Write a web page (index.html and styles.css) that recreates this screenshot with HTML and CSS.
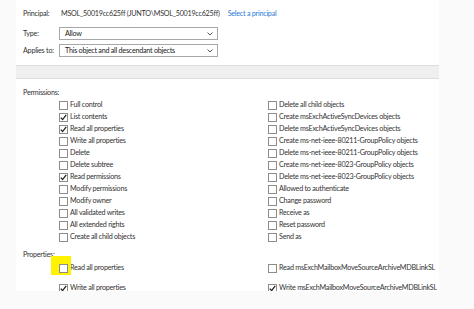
FILE: index.html
```html
<!DOCTYPE html>
<html>
<head>
<meta charset="utf-8">
<link rel="stylesheet" href="styles.css">
</head>
<body>
<div class="panel">
  <div class="principal">
    <span class="lbl">Principal:</span>
    <span class="pval">MSOL_50019cc625ff (JUNTO\MSOL_50019cc625ff)</span>
    <a class="link">Select a principal</a>
  </div>
  <div class="frow first">
    <span class="lbl">Type:</span>
    <div class="sel"><span>Allow</span><svg class="chev" width="6" height="4" viewBox="0 0 6 4"><path d="M0.5 0.5 L3 3 L5.5 0.5" fill="none" stroke="#555" stroke-width="1"/></svg></div>
  </div>
  <div class="frow">
    <span class="lbl">Applies to:</span>
    <div class="sel"><span>This object and all descendant objects</span><svg class="chev" width="6" height="4" viewBox="0 0 6 4"><path d="M0.5 0.5 L3 3 L5.5 0.5" fill="none" stroke="#555" stroke-width="1"/></svg></div>
  </div>
  <div class="bar"></div>
  <div class="section">Permissions:</div>
  <div class="grid">
    <div class="item"><span class="cb"></span>Full control</div>
    <div class="item"><span class="cb"></span>Delete all child objects</div>
    <div class="item"><span class="cb on"><svg width="7" height="7" viewBox="0 0 7 7"><path d="M0.8 3.6 L2.6 5.6 L6.2 0.9" fill="none" stroke="#222" stroke-width="1.3"/></svg></span>List contents</div>
    <div class="item"><span class="cb"></span>Create msExchActiveSyncDevices objects</div>
    <div class="item"><span class="cb on"><svg width="7" height="7" viewBox="0 0 7 7"><path d="M0.8 3.6 L2.6 5.6 L6.2 0.9" fill="none" stroke="#222" stroke-width="1.3"/></svg></span>Read all properties</div>
    <div class="item"><span class="cb"></span>Delete msExchActiveSyncDevices objects</div>
    <div class="item"><span class="cb"></span>Write all properties</div>
    <div class="item"><span class="cb"></span>Create ms-net-ieee-80211-GroupPolicy objects</div>
    <div class="item"><span class="cb"></span>Delete</div>
    <div class="item"><span class="cb"></span>Delete ms-net-ieee-80211-GroupPolicy objects</div>
    <div class="item"><span class="cb"></span>Delete subtree</div>
    <div class="item"><span class="cb"></span>Create ms-net-ieee-8023-GroupPolicy objects</div>
    <div class="item"><span class="cb on"><svg width="7" height="7" viewBox="0 0 7 7"><path d="M0.8 3.6 L2.6 5.6 L6.2 0.9" fill="none" stroke="#222" stroke-width="1.3"/></svg></span>Read permissions</div>
    <div class="item"><span class="cb"></span>Delete ms-net-ieee-8023-GroupPolicy objects</div>
    <div class="item"><span class="cb"></span>Modify permissions</div>
    <div class="item"><span class="cb"></span>Allowed to authenticate</div>
    <div class="item"><span class="cb"></span>Modify owner</div>
    <div class="item"><span class="cb"></span>Change password</div>
    <div class="item"><span class="cb"></span>All validated writes</div>
    <div class="item"><span class="cb"></span>Receive as</div>
    <div class="item"><span class="cb"></span>All extended rights</div>
    <div class="item"><span class="cb"></span>Reset password</div>
    <div class="item"><span class="cb"></span>Create all child objects</div>
    <div class="item"><span class="cb"></span>Send as</div>
  </div>
  <div class="section props">Properties:</div>
  <div class="grid prow">
    <div class="item hl-wrap"><span class="hl"></span><span class="cb"></span>Read all properties</div>
    <div class="item"><span class="cb"></span>Read msExchMailboxMoveSourceArchiveMDBLinkSL</div>
  </div>
  <div class="grid prow second">
    <div class="item"><span class="cb on"><svg width="7" height="7" viewBox="0 0 7 7"><path d="M0.8 3.6 L2.6 5.6 L6.2 0.9" fill="none" stroke="#222" stroke-width="1.3"/></svg></span>Write all properties</div>
    <div class="item"><span class="cb on"><svg width="7" height="7" viewBox="0 0 7 7"><path d="M0.8 3.6 L2.6 5.6 L6.2 0.9" fill="none" stroke="#222" stroke-width="1.3"/></svg></span>Write msExchMailboxMoveSourceArchiveMDBLinkSL</div>
  </div>
</div>
</body>
</html>
```
FILE: styles.css
```css
html, body {
  margin: 0;
  padding: 0;
  background: #fafafa;
}
body {
  font-family: "Lato", "Liberation Sans", sans-serif;
  font-size: 7.2px;
  letter-spacing: -0.25px;
  color: #333;
  width: 474px;
  height: 309px;
  overflow: hidden;
}
.panel {
  margin-left: 16px;
  width: 423px;
  height: 291px;
  background: #fff;
  box-sizing: border-box;
  padding-top: 8px;
  overflow: hidden;
}
.principal {
  display: flex;
  align-items: center;
  height: 12px;
  line-height: 12px;
  padding-left: 7px;
}
.lbl {
  width: 36px;
  flex: none;
  white-space: nowrap;
}
.pval {
  margin-left: 2px;
}
.link {
  margin-left: 8px;
  color: #2e7bd6;
}
.frow {
  display: flex;
  align-items: center;
  padding-left: 7px;
  margin-top: 4px;
}
.frow.first {
  margin-top: 7px;
}
.sel {
  width: 159px;
  height: 13px;
  box-sizing: border-box;
  border: 1px solid #a8a8a8;
  display: flex;
  align-items: center;
  justify-content: space-between;
  padding: 0 4px 0 5px;
  line-height: 11px;
  color: #222;
}
.chev {
  display: block;
}
.bar {
  margin-top: 8px;
  height: 14px;
  box-sizing: border-box;
  background: #efefef;
  border-top: 1px solid #dcdcdc;
  border-bottom: 1px solid #dcdcdc;
}
.section {
  margin-top: 8px;
  padding-left: 7px;
  height: 12px;
  line-height: 12px;
}
.section.props {
  margin-top: 6px;
}
.grid {
  display: grid;
  grid-template-columns: 209px 1fr;
  padding-left: 43px;
}
.item {
  display: flex;
  align-items: center;
  height: 12px;
  line-height: 12px;
  white-space: nowrap;
}
.cb {
  width: 9px;
  height: 9px;
  box-sizing: border-box;
  border: 1px solid #8c8c8c;
  background: #fff;
  margin-right: 2px;
  flex: none;
  display: flex;
  align-items: center;
  justify-content: center;
  position: relative;
}
.cb svg {
  display: block;
}
.prow {
  margin-top: 1px;
}
.prow.second {
  margin-top: 8px;
}
.hl-wrap {
  position: relative;
}
.hl {
  position: absolute;
  left: -8px;
  top: -6px;
  width: 20px;
  height: 19px;
  background: #fff200;
}
```
